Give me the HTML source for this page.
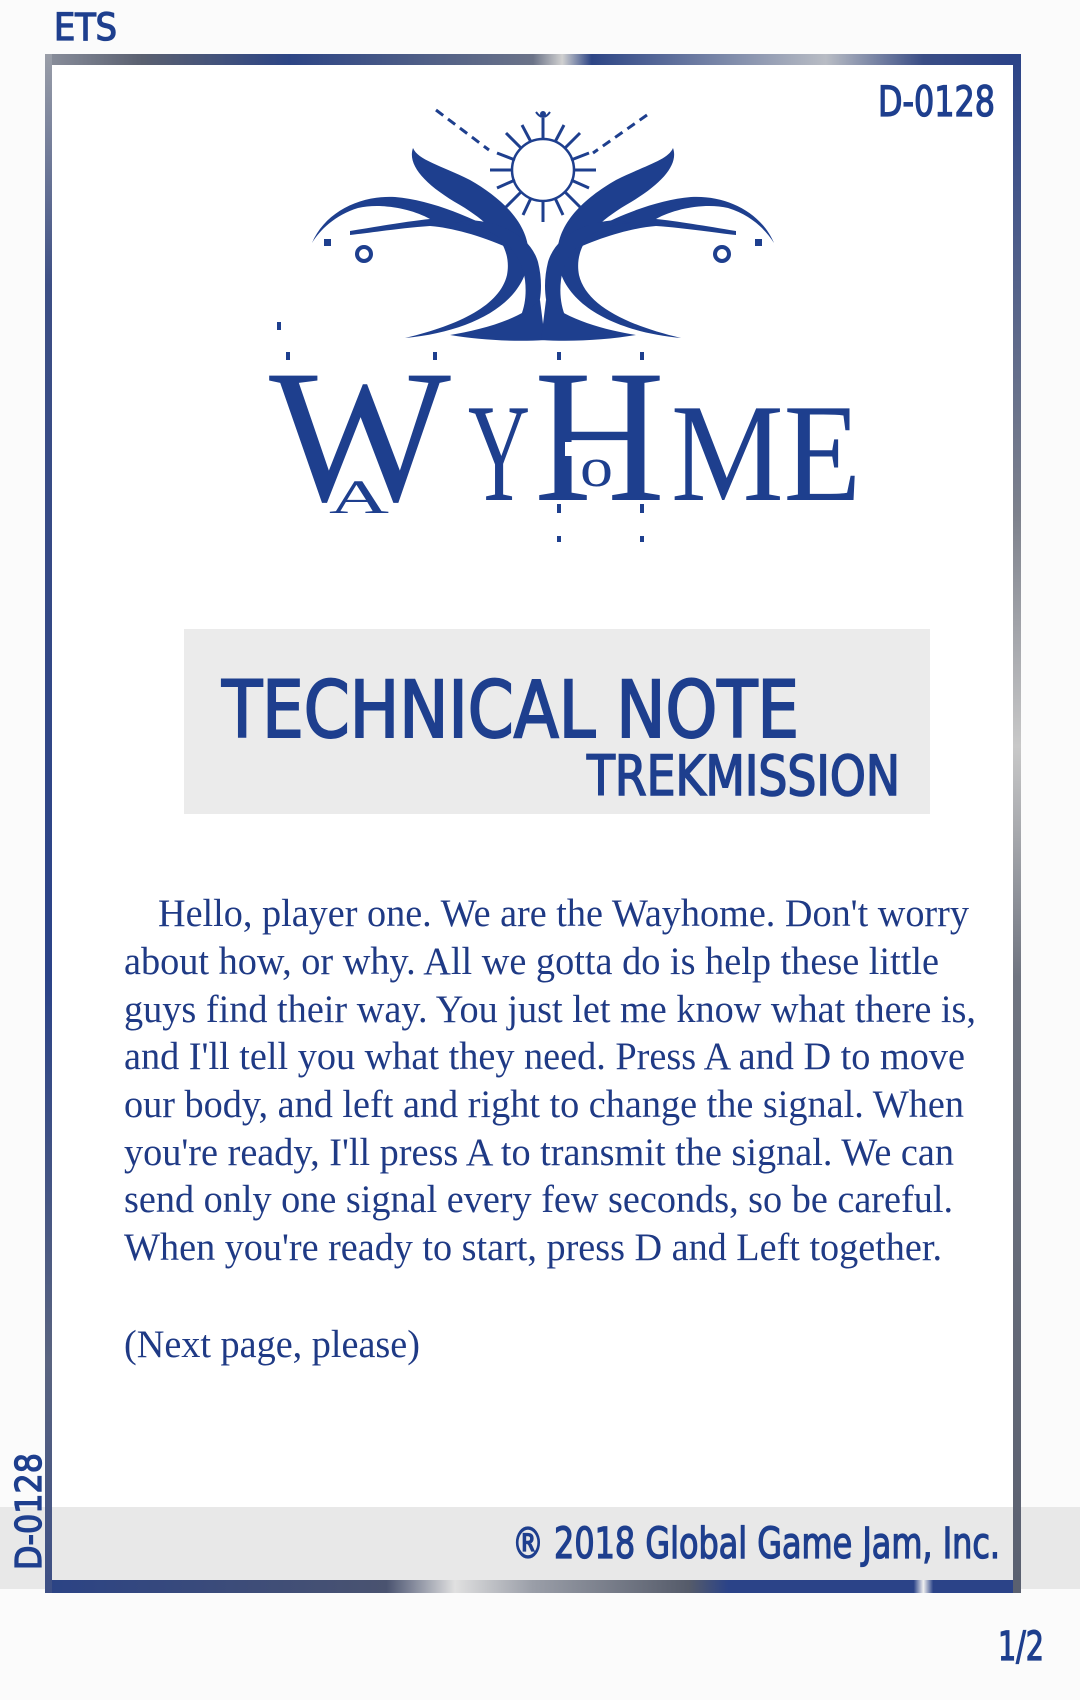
<!DOCTYPE html>
<html><head><meta charset="utf-8"><style>
html,body{margin:0;padding:0;background:#fff;}
body{width:1080px;height:1700px;position:relative;overflow:hidden;background:#fbfbfb;}
svg{position:absolute;left:0;top:0;}
</style></head><body>
<svg width="1080" height="1700" viewBox="0 0 1080 1700" xmlns="http://www.w3.org/2000/svg">
<defs>
<linearGradient id="tb" x1="0" x2="1" y1="0" y2="0">
<stop offset="0" stop-color="#8a8f9c"/><stop offset="0.1" stop-color="#5a6070"/><stop offset="0.25" stop-color="#2d4585"/><stop offset="0.5" stop-color="#6b7388"/><stop offset="0.53" stop-color="#d0d0d0"/><stop offset="0.56" stop-color="#2d4585"/><stop offset="0.8" stop-color="#b8bcc4"/><stop offset="0.9" stop-color="#3a4d85"/><stop offset="1" stop-color="#2a4288"/>
</linearGradient>
<linearGradient id="bb" x1="0" x2="1" y1="0" y2="0">
<stop offset="0" stop-color="#2b4385"/><stop offset="0.35" stop-color="#4a5370"/><stop offset="0.42" stop-color="#e0e0e0"/><stop offset="0.5" stop-color="#9a9ea8"/><stop offset="0.66" stop-color="#555b6a"/><stop offset="0.7" stop-color="#2b4388"/><stop offset="0.89" stop-color="#2b4388"/><stop offset="0.9" stop-color="#f0f0f0"/><stop offset="0.91" stop-color="#2b4388"/><stop offset="1" stop-color="#2b4388"/>
</linearGradient>
<linearGradient id="lb" x1="0" x2="0" y1="0" y2="1">
<stop offset="0" stop-color="#9a9ea8"/><stop offset="0.15" stop-color="#3d4f85"/><stop offset="0.6" stop-color="#2b4388"/><stop offset="0.85" stop-color="#5a6480"/><stop offset="1" stop-color="#3d4f85"/>
</linearGradient>
<linearGradient id="rb" x1="0" x2="0" y1="0" y2="1">
<stop offset="0" stop-color="#2b4388"/><stop offset="0.3" stop-color="#7d818c"/><stop offset="0.45" stop-color="#c8c8c8"/><stop offset="0.6" stop-color="#6f7480"/><stop offset="1" stop-color="#5a6070"/>
</linearGradient>
</defs>
<rect x="45" y="54" width="976" height="1539" fill="#ffffff"/>
<rect x="0" y="1507" width="1080" height="82" fill="#e8e8e8"/>
<rect x="45" y="54" width="976" height="11" fill="url(#tb)"/>
<rect x="45" y="1580" width="976" height="13" fill="url(#bb)"/>
<rect x="45" y="54" width="7" height="1539" fill="url(#lb)"/>
<rect x="1013" y="54" width="8" height="1539" fill="url(#rb)"/>
<rect x="184" y="629" width="746" height="185" fill="#ebebeb"/>

<g fill="#1e3f8e" stroke="#1e3f8e" stroke-width="1.3" font-family="'Liberation Sans Narrow','DejaVu Sans Condensed','Liberation Sans',sans-serif">
<text x="54" y="40" font-size="37" textLength="63" lengthAdjust="spacingAndGlyphs">ETS</text>
<text x="878" y="116" font-size="42" textLength="117" lengthAdjust="spacingAndGlyphs">D-0128</text>
<text x="222" y="737" font-size="78" stroke-width="2" textLength="577" lengthAdjust="spacingAndGlyphs">TECHNICAL NOTE</text>
<text x="587" y="795" font-size="55" stroke-width="1.6" textLength="313" lengthAdjust="spacingAndGlyphs">TREKMISSION</text>
<text x="512" y="1558" font-size="43" textLength="488" lengthAdjust="spacingAndGlyphs">® 2018 Global Game Jam, Inc.</text>
<text x="998" y="1660" font-size="40" textLength="46" lengthAdjust="spacingAndGlyphs">1/2</text>
<text transform="translate(41,1570) rotate(-90)" font-family="'DejaVu Sans','Liberation Sans',sans-serif" font-size="36" textLength="117" lengthAdjust="spacingAndGlyphs">D-0128</text>
</g>

<g fill="#1e3f8e" stroke="none">
 <line x1="436" y1="110" x2="489" y2="150" stroke="#1e3f8e" stroke-width="3" stroke-dasharray="9,6"/>
 <line x1="647" y1="115" x2="593" y2="153" stroke="#1e3f8e" stroke-width="3" stroke-dasharray="9,6"/>
 <circle cx="543" cy="170" r="31" fill="#fff" stroke="#1e3f8e" stroke-width="2.5"/>
 <g stroke="#1e3f8e" stroke-width="3">
  <line x1="543" y1="139" x2="543" y2="118"/><line x1="543" y1="201" x2="543" y2="222"/>
  <line x1="512" y1="170" x2="490" y2="170"/><line x1="574" y1="170" x2="596" y2="170"/>
  <line x1="521" y1="148" x2="506" y2="133"/><line x1="565" y1="148" x2="580" y2="133"/>
  <line x1="521" y1="192" x2="506" y2="207"/><line x1="565" y1="192" x2="580" y2="207"/>
  <line x1="531" y1="142" x2="522" y2="125"/><line x1="555" y1="142" x2="564" y2="125"/>
  <line x1="531" y1="198" x2="523" y2="215"/><line x1="555" y1="198" x2="563" y2="215"/>
  <line x1="515" y1="160" x2="497" y2="153"/><line x1="571" y1="160" x2="589" y2="153"/>
  <line x1="515" y1="180" x2="497" y2="188"/><line x1="571" y1="180" x2="589" y2="188"/>
 </g>
 <circle cx="543" cy="114" r="3"/>
 <path d="M536,112 Q543,122 550,112" fill="none" stroke="#1e3f8e" stroke-width="2"/>
 <g id="half">
  <path d="M405,338 C470,332 522,305 528,262 C533,228 505,200 470,180 C440,165 418,160 413,148 C407,165 425,185 460,205 C495,226 512,248 507,275 C500,305 460,325 405,338 Z"/>
  <path d="M312,243 C325,212 360,195 395,197 C440,201 490,225 528,250 L525,256 C490,238 455,228 430,226 C400,228 370,233 350,235 L350,231 C380,226 410,221 430,219 C410,208 380,203 358,208 C335,215 320,230 312,243 Z"/>
  <path d="M455,223 C490,225 520,245 525,280 C528,305 520,325 505,338 L520,340 C540,320 545,290 538,262 C530,235 500,222 470,220 Z"/>
  <path d="M450,335 C480,330 520,320 540,300 L545,340 C515,342 480,340 450,335 Z"/>
  <rect x="324" y="239" width="7" height="7"/>
  <ellipse cx="364" cy="254" rx="7" ry="7" fill="none" stroke="#1e3f8e" stroke-width="4"/>
 </g>
 <use href="#half" transform="translate(1086,0) scale(-1,1)"/>
 <g>
  <rect x="277" y="322" width="4" height="8"/>
  <rect x="286" y="352" width="4" height="8"/><rect x="433" y="352" width="4" height="8"/><rect x="557" y="352" width="4" height="8"/><rect x="640" y="352" width="4" height="8"/>
  <rect x="557" y="504" width="4" height="9"/><rect x="640" y="504" width="4" height="9"/>
  <rect x="557" y="536" width="4" height="6"/><rect x="640" y="536" width="4" height="6"/>
 </g>
 <g font-family="'Liberation Serif','DejaVu Serif',serif">
  <text x="269" y="500" font-size="190" textLength="182" lengthAdjust="spacingAndGlyphs">W</text>
  <text x="329" y="513" font-size="48" textLength="60" lengthAdjust="spacingAndGlyphs">A</text>
  <text x="468" y="500" font-size="140" textLength="62" lengthAdjust="spacingAndGlyphs">Y</text>
  <text x="534" y="500" font-size="190" textLength="131" lengthAdjust="spacingAndGlyphs">H</text>
  <rect x="565" y="442" width="40" height="14" fill="#fff"/>
  <text x="580" y="486" font-size="56" textLength="33" lengthAdjust="spacingAndGlyphs">o</text>
  <text x="671" y="500" font-size="140" textLength="190" lengthAdjust="spacingAndGlyphs">ME</text>
 </g>
</g>

<g fill="#1f3a85" font-family="'Liberation Serif','DejaVu Serif',serif" font-size="39">
<text x="158" y="926" textLength="811" lengthAdjust="spacingAndGlyphs">Hello, player one. We are the Wayhome. Don't worry</text>
<text x="124" y="974" textLength="815" lengthAdjust="spacingAndGlyphs">about how, or why. All we gotta do is help these little</text>
<text x="124" y="1022" textLength="852" lengthAdjust="spacingAndGlyphs">guys find their way. You just let me know what there is,</text>
<text x="124" y="1069" textLength="841" lengthAdjust="spacingAndGlyphs">and I'll tell you what they need. Press A and D to move</text>
<text x="124" y="1117" textLength="840" lengthAdjust="spacingAndGlyphs">our body, and left and right to change the signal. When</text>
<text x="124" y="1165" textLength="830" lengthAdjust="spacingAndGlyphs">you're ready, I'll press A to transmit the signal. We can</text>
<text x="124" y="1212" textLength="829" lengthAdjust="spacingAndGlyphs">send only one signal every few seconds, so be careful.</text>
<text x="124" y="1260" textLength="818" lengthAdjust="spacingAndGlyphs">When you're ready to start, press D and Left together.</text>
<text x="124" y="1357" textLength="296" lengthAdjust="spacingAndGlyphs">(Next page, please)</text>
</g>
</svg>
</body></html>
